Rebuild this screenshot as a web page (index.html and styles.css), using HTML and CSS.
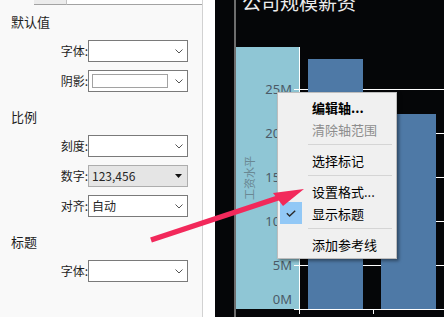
FILE: index.html
```html
<!DOCTYPE html>
<html lang="zh">
<head>
<meta charset="utf-8">
<link rel="stylesheet" href="styles.css">
</head>
<body>
<div class="app">
  <aside class="panel">
    <div class="tabs"><span class="tab-gap"></span><span class="tab"></span><span class="tab-rest"></span></div>

    <section class="group first">
      <h3>默认值</h3>
      <div class="row"><label>字体:</label><div class="select"><span class="val"></span><svg class="chev" width="8" height="5" viewBox="0 0 8 5"><polyline points="0.5,0.5 4,4 7.5,0.5"/></svg></div></div>
      <div class="row"><label>阴影:</label><div class="select"><span class="swatch"></span><svg class="chev" width="8" height="5" viewBox="0 0 8 5"><polyline points="0.5,0.5 4,4 7.5,0.5"/></svg></div></div>
    </section>

    <section class="group">
      <h3>比例</h3>
      <div class="row"><label>刻度:</label><div class="select"><span class="val"></span><svg class="chev" width="8" height="5" viewBox="0 0 8 5"><polyline points="0.5,0.5 4,4 7.5,0.5"/></svg></div></div>
      <div class="row"><label>数字:</label><div class="select select-grey"><span class="val">123,456</span><svg class="tri" width="7" height="4" viewBox="0 0 7 4"><polygon points="0,0 7,0 3.5,4"/></svg></div></div>
      <div class="row"><label>对齐:</label><div class="select"><span class="val">自动</span><svg class="chev" width="8" height="5" viewBox="0 0 8 5"><polyline points="0.5,0.5 4,4 7.5,0.5"/></svg></div></div>
    </section>

    <section class="group">
      <h3>标题</h3>
      <div class="row"><label>字体:</label><div class="select"><span class="val"></span><svg class="chev" width="8" height="5" viewBox="0 0 8 5"><polyline points="0.5,0.5 4,4 7.5,0.5"/></svg></div></div>
    </section>
  </aside>

  <div class="gap"></div>

  <main class="chart">
    <svg class="plot" width="229" height="317" viewBox="215 0 229 317">
      <rect x="215" y="0" width="229" height="317" fill="#050608"/>
      <rect x="234" y="0" width="2" height="317" fill="#6d6d6d"/>
      <text class="title" x="242" y="10">公司规模薪资</text>
      <rect x="236" y="47" width="63" height="262" fill="#8fc6d5"/>
      <g stroke="#ffffff" stroke-width="1">
        <line x1="294" y1="89.5" x2="444" y2="89.5"/>
        <line x1="294" y1="133.5" x2="444" y2="133.5"/>
        <line x1="294" y1="177.5" x2="444" y2="177.5"/>
        <line x1="294" y1="221.5" x2="444" y2="221.5"/>
        <line x1="294" y1="265.5" x2="444" y2="265.5"/>
        <line x1="294" y1="309.5" x2="444" y2="309.5"/>
        <line x1="299.5" y1="47" x2="299.5" y2="314"/>
        <line x1="373.5" y1="309" x2="373.5" y2="314"/>
      </g>
      <rect x="308" y="59" width="55" height="250" fill="#4e79a6"/>
      <rect x="381" y="114" width="55" height="195" fill="#4e79a6"/>
      <g class="ylab">
        <text x="292" y="94">25M</text>
        <text x="292" y="138">20M</text>
        <text x="292" y="182">15M</text>
        <text x="292" y="226">10M</text>
        <text x="292" y="270">5M</text>
        <text x="292" y="304">0M</text>
      </g>
      <text class="axis-title" transform="translate(254 178) rotate(-90)">工资水平</text>
    </svg>

    <div class="menu">
      <div class="item bold"><span class="icon"></span><span>编辑轴...</span></div>
      <div class="item disabled"><span class="icon"></span><span>清除轴范围</span></div>
      <div class="sep"></div>
      <div class="item"><span class="icon"></span><span>选择标记</span></div>
      <div class="sep"></div>
      <div class="item"><span class="icon"></span><span>设置格式...</span></div>
      <div class="item"><span class="icon checked"><svg width="10" height="7" viewBox="0 0 10 7"><polyline points="0.8,3.3 3.6,6 9.2,0.8"/></svg></span><span>显示标题</span></div>
      <div class="sep"></div>
      <div class="item"><span class="icon"></span><span>添加参考线</span></div>
    </div>
  </main>
</div>

<svg class="arrow" width="444" height="317" viewBox="0 0 444 317">
  <line x1="151" y1="240" x2="284" y2="196" stroke="#f2295b" stroke-width="5.5"/>
  <polygon points="304,189 273,193 283,206" fill="#f2295b"/>
</svg>
</body>
</html>
```

FILE: styles.css
```css
html, body {
  margin: 0;
  padding: 0;
}

body {
  width: 444px;
  height: 317px;
  overflow: hidden;
  position: relative;
  font-family: "Noto Sans CJK SC", "Noto Sans", sans-serif;
  color: #1e1e1e;
  background: #ffffff;
}

.app {
  display: flex;
  height: 317px;
}

.panel {
  width: 202px;
  flex: none;
  background: #f9f9f9;
  border-right: 1px solid #d2d2d2;
  height: 317px;
}

.tabs {
  display: flex;
  height: 5px;
}

.tab-gap {
  width: 34px;
}

.tab {
  width: 32px;
  height: 4px;
  background: #ececec;
  border-right: 1px solid #c4c4c4;
  border-bottom: 1px solid #a3a3a3;
}

.tab-rest {
  flex: 1;
  height: 4px;
  background: #ffffff;
  border-bottom: 1px solid #a3a3a3;
}

.group {
  display: flex;
  flex-direction: column;
  gap: 8px;
  margin-top: 15px;
}

.group.first {
  margin-top: 7px;
}

.group h3 {
  margin: 0;
  padding-left: 11px;
  font-size: 13px;
  font-weight: normal;
  line-height: 20px;
  height: 20px;
  color: #1e1e1e;
}

.row {
  display: flex;
  align-items: center;
  height: 22px;
}

.row label {
  width: 88px;
  text-align: right;
  font-size: 12px;
  line-height: 22px;
  color: #1e1e1e;
}

.select {
  width: 100px;
  height: 22px;
  box-sizing: border-box;
  border: 1px solid #7a7a7a;
  background: #ffffff;
  display: flex;
  align-items: center;
  padding-left: 3px;
}

.select-grey {
  background: #e5e5e5;
  border-color: #adadad;
}

.val {
  font-size: 12px;
  line-height: 20px;
  color: #262626;
}

.swatch {
  width: 76px;
  height: 14px;
  box-sizing: border-box;
  border: 1px solid #a2a2a2;
  background: #ffffff;
}

.chev {
  margin-left: auto;
  margin-right: 4px;
  display: block;
}

.chev polyline {
  fill: none;
  stroke: #555555;
  stroke-width: 1;
}

.tri {
  margin-left: auto;
  margin-right: 5px;
  display: block;
}

.tri polygon {
  fill: #111111;
}

.gap {
  width: 12px;
  flex: none;
  background: #ffffff;
}

.chart {
  position: relative;
  flex: 1;
  height: 317px;
  background: #050608;
}

.plot {
  display: block;
}

.title {
  font-family: "Noto Sans CJK SC", sans-serif;
  font-size: 19px;
  fill: #ececec;
}

.ylab text {
  font-family: "Noto Sans", "Noto Sans CJK SC", sans-serif;
  font-size: 13px;
  fill: #4b5a67;
  text-anchor: end;
}

.axis-title {
  font-family: "Noto Sans CJK SC", sans-serif;
  font-size: 11px;
  fill: #6a8893;
  text-anchor: middle;
}

.menu {
  position: absolute;
  left: 62px;
  top: 92px;
  width: 120px;
  box-sizing: border-box;
  padding: 3px 0;
  background: #f0f0f0;
  border: 1px solid #bdbdbd;
  box-shadow: 2px 2px 3px rgba(0, 0, 0, 0.4);
}

.item {
  display: flex;
  align-items: center;
  gap: 10px;
  height: 22px;
  padding-left: 2px;
  font-size: 13px;
  color: #000000;
  white-space: nowrap;
}

.item.bold {
  font-weight: bold;
}

.item.disabled {
  color: #8d8d8d;
}

.icon {
  width: 22px;
  height: 22px;
  flex: none;
  display: flex;
  align-items: center;
  justify-content: center;
}

.icon.checked {
  background: #92c8f6;
}

.icon.checked polyline {
  fill: none;
  stroke: #2b2b2b;
  stroke-width: 1.4;
}

.sep {
  height: 1px;
  margin: 4px 4px 4px 30px;
  background: #d5d5d5;
}

.arrow {
  position: absolute;
  left: 0;
  top: 0;
  pointer-events: none;
}
```
